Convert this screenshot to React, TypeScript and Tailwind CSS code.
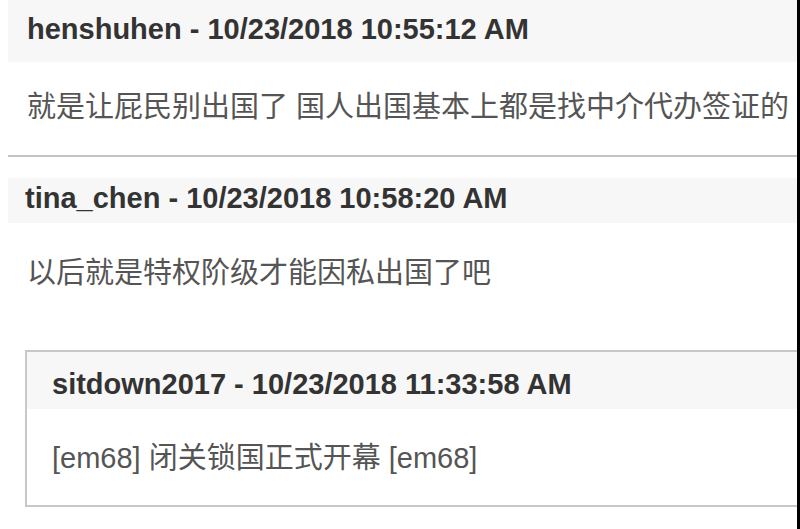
import React from "react";

const head = "font-['Liberation_Sans',Arial,sans-serif] font-bold text-[29px] leading-[33px] text-[#333333] whitespace-nowrap";
const body = "font-['Liberation_Sans','Noto_Sans_CJK_SC',sans-serif] text-[29px] leading-[33px] text-[#555555] whitespace-nowrap";

export default function App() {
  return (
    <div className="w-[800px] h-[529px] flex bg-white overflow-hidden">
      <div className="flex-1 flex flex-col min-w-0">
        {/* comment 1 */}
        <div className="ml-[8px] border-b-2 border-[#c4c4c4]">
          <div className="h-[62px] bg-[#f7f7f7] pl-[19px] pt-[13px]">
            <div className={head}>henshuhen - 10/23/2018 10:55:12 AM</div>
          </div>
          <div className="h-[93px] pl-[19px] pt-[29px]">
            <div className={body}>就是让屁民别出国了 国人出国基本上都是找中介代办签证的</div>
          </div>
        </div>
        {/* comment 2 */}
        <div className="ml-[8px] mt-[21px]">
          <div className="h-[45px] bg-[#f7f7f7] pl-[17px] pt-[4px]">
            <div className={head}>tina_chen - 10/23/2018 10:58:20 AM</div>
          </div>
          <div className="h-[127px] pl-[19px] pt-[34px]">
            <div className={body}>以后就是特权阶级才能因私出国了吧</div>
          </div>
        </div>
        {/* reply box */}
        <div className="ml-[25px] border-2 border-r-0 border-[#c8c8c8] h-[157px] flex flex-col">
          <div className="h-[57px] bg-[#f7f7f7] pl-[25px] pt-[16px]">
            <div className={head}>sitdown2017 - 10/23/2018 11:33:58 AM</div>
          </div>
          <div className="flex-1 pl-[25px] pt-[33px]">
            <div className={body}>[em68] 闭关锁国正式开幕 [em68]</div>
          </div>
        </div>
      </div>
      <div className="w-[3px] bg-black" />
    </div>
  );
}
